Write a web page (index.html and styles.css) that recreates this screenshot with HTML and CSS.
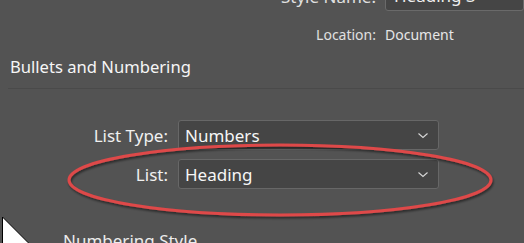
FILE: index.html
```html
<!DOCTYPE html>
<html lang="en">

<head>
    <meta charset="UTF-8">
    <title>Paragraph Style Options</title>
    <link rel="stylesheet" href="styles.css">
</head>

<body>

    <div class="panel">
        <div class="top-row name-row">
            <span class="top-label">Style Name:</span>
            <div class="name-field">Heading 3</div>
        </div>

        <div class="top-row location-row">
            <span class="top-label">Location:</span>
            <span class="top-value">Document</span>
        </div>

        <h2 class="section-title">Bullets and Numbering</h2>
        <div class="separator"></div>

        <div class="form">
            <label class="form-label">List Type:</label>
            <div class="dropdown">
                <span>Numbers</span>
                <svg class="chevron" width="12" height="7" viewBox="0 0 12 7">
                    <path d="M1.5 1.5 L6 5.5 L10.5 1.5" fill="none" stroke="#d8d8d8" stroke-width="1.1"/>
                </svg>
            </div>

            <label class="form-label">List:</label>
            <div class="dropdown">
                <span>Heading</span>
                <svg class="chevron" width="12" height="7" viewBox="0 0 12 7">
                    <path d="M1.5 1.5 L6 5.5 L10.5 1.5" fill="none" stroke="#d8d8d8" stroke-width="1.1"/>
                </svg>
            </div>
        </div>

        <div class="subsection">Numbering Style</div>
    </div>

    <!-- annotation drawn over the dialog -->
    <svg class="highlight" width="524" height="243" viewBox="0 0 524 243">
        <defs>
            <filter id="shade" x="-10%" y="-30%" width="120%" height="160%">
                <feDropShadow dx="1" dy="2" stdDeviation="1.2" flood-color="#000" flood-opacity="0.5"/>
            </filter>
        </defs>
        <ellipse cx="280" cy="180" rx="211" ry="35" fill="none" stroke="#de4848" stroke-width="3" filter="url(#shade)"/>
    </svg>

    <svg class="cursor" width="30" height="30" viewBox="0 0 30 30">
        <path d="M2.5 1 L28 26.5 L28 30 L2.5 30 Z" fill="#fff" stroke="#000" stroke-width="1"/>
    </svg>

</body>

</html>
```

FILE: styles.css
```css
body {
    margin: 0;
    width: 524px;
    height: 243px;
    overflow: hidden;
    background-color: #535353;
    color: #e6e6e6;
    font-family: "Noto Sans", "Open Sans", sans-serif;
    position: relative;
}

.top-row {
    display: grid;
    grid-template-columns: 376px 1fr;
    column-gap: 9px;
    align-items: center;
    font-size: 14px;
}

.top-label {
    text-align: right;
    color: #e0e0e0;
}

.name-row {
    margin-top: -19px;
    height: 30px;
}

.name-row .top-label {
    font-size: 17px;
}

.name-field {
    height: 28px;
    border: 1px solid #6a6a6a;
    border-radius: 3px;
    background-color: #454545;
    padding-left: 8px;
    font-size: 17px;
    line-height: 28px;
    color: #f0f0f0;
}

.location-row {
    height: 20px;
    margin-top: 13px;
}

.top-value {
    color: #e6e6e6;
}

.section-title {
    margin: 13px 0 0 10px;
    font-size: 16.6px;
    font-weight: normal;
    color: #f6f6f6;
    line-height: 20px;
}

.separator {
    margin: 11px 0 0 8px;
    height: 1px;
    background-color: #4a4a4a;
}

.form {
    display: grid;
    grid-template-columns: 168px 261px;
    column-gap: 10px;
    row-gap: 9px;
    align-items: center;
    margin-top: 31px;
}

.form-label {
    text-align: right;
    font-size: 17px;
    color: #f0f0f0;
}

.dropdown {
    height: 28px;
    border: 1px solid #676767;
    border-radius: 3px;
    background-color: #454545;
    display: flex;
    align-items: center;
    justify-content: space-between;
    padding: 0 8px 0 6px;
    font-size: 17px;
    color: #f6f6f6;
}

.chevron {
    margin-right: 1px;
}

.subsection {
    margin: 40px 0 0 63px;
    font-size: 17px;
    color: #ececec;
}

.highlight {
    position: absolute;
    left: 0;
    top: 0;
}

.cursor {
    position: absolute;
    left: 0;
    top: 216px;
}
```
